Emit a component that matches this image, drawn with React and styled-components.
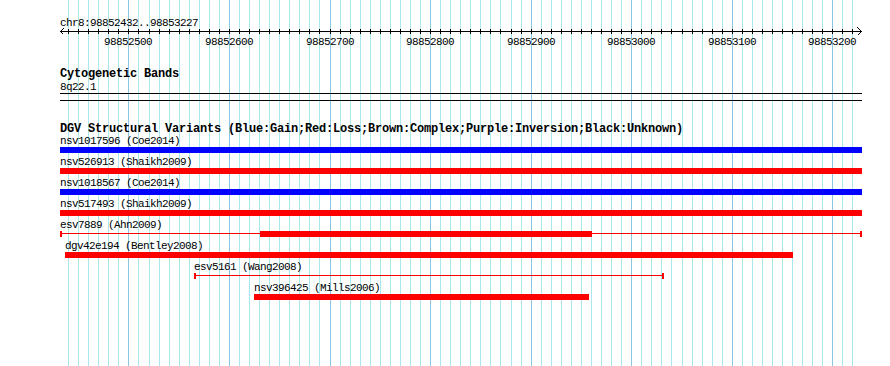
import React from 'react';
import styled, { createGlobalStyle } from 'styled-components';

const START = 98852432;
const END = 98853227;
const WIDTH = 802;
const SCALE = 1.0057;

const toX = (bp) => Math.min(WIDTH, Math.max(0, Math.round((bp - START) * SCALE)));

const COLORS = { Gain: '#0000ff', Loss: '#ff0000' };

const features = [
  { name: 'nsv1017596', study: 'Coe2014', type: 'Gain', start: 98850000, end: 98860000 },
  { name: 'nsv526913', study: 'Shaikh2009', type: 'Loss', start: 98850000, end: 98860000 },
  { name: 'nsv1018567', study: 'Coe2014', type: 'Gain', start: 98850000, end: 98860000 },
  { name: 'nsv517493', study: 'Shaikh2009', type: 'Loss', start: 98850000, end: 98860000 },
  { name: 'esv7889', study: 'Ahn2009', type: 'Loss', start: 98850000, end: 98860000, thickStart: 98852631, thickEnd: 98852961 },
  { name: 'dgv42e194', study: 'Bentley2008', type: 'Loss', start: 98852437, end: 98853161 },
  { name: 'esv5161', study: 'Wang2008', type: 'Loss', start: 98852565, end: 98853033, thickStart: 0, thickEnd: 0 },
  { name: 'nsv396425', study: 'Mills2006', type: 'Loss', start: 98852625, end: 98852958 },
];

const gridStops = [];
for (let bp = Math.ceil(START / 10) * 10; bp <= END; bp += 10) gridStops.push(bp);

const GlobalStyle = createGlobalStyle`
  html, body {
    margin: 0;
    padding: 0;
    background: #ffffff;
  }
  body {
    font-family: "Liberation Mono", "DejaVu Sans Mono", monospace;
    color: #000000;
  }
`;

// small label text: 11px mono squeezed to a 6px advance
const smallText = `
  font-size: 11px;
  letter-spacing: -0.6px;
  line-height: 10px;
  white-space: nowrap;
`;

const Page = styled.div`
  width: 890px;
  height: 366px;
  padding-left: 60px;
  box-sizing: border-box;
  overflow: hidden;
`;

const Chart = styled.div`
  position: relative;
  width: ${WIDTH}px;
  height: 366px;
`;

const GridLayer = styled.svg`
  position: absolute;
  top: 0;
  left: 0;
  width: ${WIDTH}px;
  height: 366px;
`;

const Tracks = styled.div`
  position: relative;
`;

const PositionLabel = styled.div`
  padding-top: 18px;
  height: 10px;
  ${smallText}
`;

const Axis = styled.svg`
  display: block;
  width: 810px;
  height: 22px;
  overflow: visible;
  font-family: "Liberation Mono", monospace;
  font-size: 11px;
  letter-spacing: -0.6px;
`;

const TrackTitle = styled.div`
  margin-top: ${({ $gap }) => $gap}px;
  height: 12px;
  font-size: 12px;
  font-weight: bold;
  letter-spacing: -0.2px;
  line-height: 12px;
  white-space: nowrap;
`;

const BandLabel = styled.div`
  margin-top: 2px;
  height: 10px;
  ${smallText}
`;

const BandBox = styled.div`
  margin-top: 1px;
  height: 6px;
  border-top: 1px solid #000;
  border-bottom: 1px solid #000;
`;

const FeatureList = styled.div`
  margin-top: 1px;
`;

const FeatureRow = styled.div`
  position: relative;
  height: 21px;
`;

const FeatureLabel = styled.span`
  position: absolute;
  top: 0;
  ${smallText}
`;

const Thick = styled.div`
  position: absolute;
  top: 11px;
  height: 6px;
  background: ${({ $color }) => $color};
`;

const Thin = styled.div`
  position: absolute;
  top: 13px;
  height: 1px;
  background: ${({ $color }) => $color};
`;

const EndCap = styled.div`
  position: absolute;
  top: 11px;
  width: 2px;
  height: 6px;
  background: ${({ $color }) => $color};
`;

function Feature({ f }) {
  const color = COLORS[f.type];
  const x0 = toX(f.start);
  const x1 = toX(f.end);
  const hasThick = f.thickStart !== undefined;
  const t0 = hasThick ? toX(f.thickStart) : x0;
  const t1 = hasThick ? toX(f.thickEnd) : x1;

  return (
    <FeatureRow>
      <FeatureLabel style={{ left: x0 }}>{f.name} ({f.study})</FeatureLabel>
      {hasThick && (
        <>
          <Thin $color={color} style={{ left: x0, width: x1 - x0 }} />
          <EndCap $color={color} style={{ left: x0 }} />
          <EndCap $color={color} style={{ left: x1 - 2 }} />
        </>
      )}
      {t1 > t0 && <Thick $color={color} style={{ left: t0, width: t1 - t0 }} />}
    </FeatureRow>
  );
}

function Ruler() {
  const ticks = gridStops.map((bp) => toX(bp));
  const labels = gridStops.filter((bp) => bp % 100 === 0);
  return (
    <>
      <PositionLabel>chr8:{START}..{END}</PositionLabel>
      <Axis>
        <g stroke="#000" strokeWidth="1" fill="none" shapeRendering="crispEdges">
          <line x1="0" y1="3.5" x2="802" y2="3.5" />
          {ticks.map((x) => (
            <line key={x} x1={x + 0.5} y1="1" x2={x + 0.5} y2="6" />
          ))}
          <polyline points="3.5,0.5 0.5,3.5 3.5,6.5" />
          <polyline points="797.5,-0.5 801.5,3.5 797.5,7.5" />
        </g>
        {labels.map((bp) => (
          <text key={bp} x={toX(bp)} y="17" textAnchor="middle" fill="#000">
            {bp}
          </text>
        ))}
      </Axis>
    </>
  );
}

export default function App() {
  return (
    <Page>
      <GlobalStyle />
      <Chart>
        <GridLayer>
          <g shapeRendering="crispEdges" strokeWidth="1">
            {gridStops.map((bp) => (
              <line
                key={bp}
                x1={toX(bp) + 0.5}
                y1="0"
                x2={toX(bp) + 0.5}
                y2="366"
                stroke={bp % 100 === 0 ? '#8cc6e6' : '#aae8ee'}
              />
            ))}
          </g>
        </GridLayer>
        <Tracks>
          <Ruler />
          <TrackTitle $gap={18}>Cytogenetic Bands</TrackTitle>
          <BandLabel>8q22.1</BandLabel>
          <BandBox />
          <TrackTitle $gap={22}>
            DGV Structural Variants (Blue:Gain;Red:Loss;Brown:Complex;Purple:Inversion;Black:Unknown)
          </TrackTitle>
          <FeatureList>
            {features.map((f) => (
              <Feature key={f.name} f={f} />
            ))}
          </FeatureList>
        </Tracks>
      </Chart>
    </Page>
  );
}
